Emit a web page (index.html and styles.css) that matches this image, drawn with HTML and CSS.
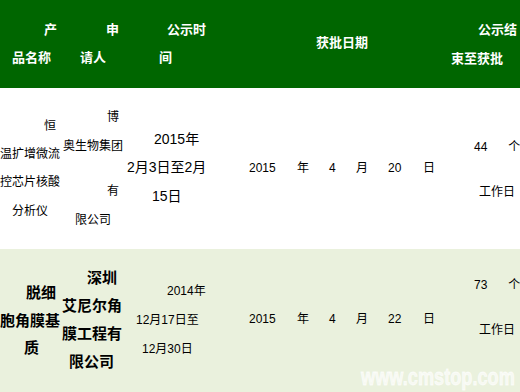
FILE: index.html
```html
<!DOCTYPE html>
<html lang="zh-CN">
<head>
<meta charset="utf-8">
<title>公示</title>
<link rel="stylesheet" href="styles.css">
</head>
<body>
<div class="tbl">
  <div class="row head">
    <div class="cell vh"><div class="x44">产</div><div class="x12">品名称</div></div>
    <div class="cell vh"><div class="x44">申</div><div class="x18">请人</div></div>
    <div class="cell vh"><div class="x42">公示时</div><div class="x34">间</div></div>
    <div class="cell vh-one"><div class="x107">获批日期</div></div>
    <div class="cell vh5"><div class="x33">公示结</div><div class="x6">束至获批</div></div>
  </div>
  <div class="row r1">
    <div class="cell r1c1"><div class="x44">恒</div><div>温扩增微流</div><div>控芯片核酸</div><div class="x12">分析仪</div></div>
    <div class="cell r1c2"><div class="x45">博</div><div class="x1">奥生物集团</div><div class="x45 gap">有</div><div class="x13">限公司</div></div>
    <div class="cell r1c3"><div class="x29">2015年</div><div class="x2">2月3日至2月</div><div class="x27">15日</div></div>
    <div class="cell r1c4"><div class="date"><span>2015</span><span>年</span><span>4</span><span>月</span><span>20</span><span>日</span></div></div>
    <div class="cell r1c5"><div class="x29">44<span class="unit">个</span></div><div class="x34">工作日</div></div>
  </div>
  <div class="row r2">
    <div class="cell r2c1"><div class="x26">脱细</div><div>胞角膜基</div><div class="x24">质</div></div>
    <div class="cell r2c2"><div class="x25">深圳</div><div>艾尼尔角</div><div>膜工程有</div><div class="x7">限公司</div></div>
    <div class="cell r2c3"><div class="x42">2014年</div><div class="x11">12月17日至</div><div class="x17">12月30日</div></div>
    <div class="cell r2c4"><div class="date"><span>2015</span><span>年</span><span>4</span><span>月</span><span>22</span><span>日</span></div></div>
    <div class="cell r2c5"><div class="x29">73<span class="unit">个</span></div><div class="x34">工作日</div></div>
  </div>
</div>
<div class="watermark">www.cmstop.com</div>
</body>
</html>
```
FILE: styles.css
```css
* { box-sizing: border-box; margin: 0; padding: 0; }
html, body { width: 520px; height: 392px; overflow: hidden; }
body {
  position: relative;
  font-family: "Liberation Sans", "Noto Sans CJK SC", sans-serif;
  font-size: 12px;
  color: #000;
  background: #fff;
}
.row {
  display: grid;
  grid-template-columns: 62px 63px 84px 236px 75px;
}
.cell { white-space: nowrap; }
.head { height: 88px; background: #006600; color: #fff; font-weight: bold; font-size: 13px; }
.r1 { height: 161px; background: #fff; }
.r2 { height: 143px; background: #eaf1dd; }

/* header cells */
.vh { padding-top: 16px; line-height: 27.5px; }
.vh-one { padding-top: 29px; line-height: 27.5px; }
.vh5 { padding-top: 14.5px; line-height: 29px; }

/* row 1 */
.r1c1 { padding-top: 23.8px; line-height: 28.3px; }
.r1c2 { padding-top: 15.2px; line-height: 28.5px; }
.r1c2 .gap { margin-top: 17px; }
.r1c3 { padding-top: 36.7px; line-height: 28.5px; font-size: 14px; }
.r1c4 { padding-top: 66px; line-height: 28px; }
.r1c5 { padding-top: 36.5px; line-height: 45px; }

/* row 2 */
.r2c1 { padding-top: 30.4px; line-height: 27.25px; font-size: 15px; font-weight: bold; }
.r2c2 { padding-top: 14.5px; line-height: 28px; font-size: 15px; font-weight: bold; }
.r2c3 { padding-top: 28.1px; line-height: 28.75px; }
.r2c4 { padding-top: 56px; line-height: 28px; }
.r2c5 { padding-top: 13.75px; line-height: 45.5px; }

/* date row inside 获批日期 */
.date {
  display: grid;
  grid-template-columns: 48px 32px 27px 32px 35px auto;
  padding-left: 40px;
}
.unit { margin-left: 21px; }

/* line indents */
.x1 { padding-left: 1px; }
.x2 { padding-left: 2px; }
.x6 { padding-left: 6px; }
.x7 { padding-left: 7px; }
.x11 { padding-left: 11px; }
.x12 { padding-left: 12px; }
.x13 { padding-left: 13px; }
.x17 { padding-left: 17px; }
.x18 { padding-left: 18px; }
.x24 { padding-left: 24px; }
.x25 { padding-left: 25px; }
.x26 { padding-left: 26px; }
.x27 { padding-left: 27px; }
.x29 { padding-left: 29px; }
.x33 { padding-left: 33px; }
.x34 { padding-left: 34px; }
.x42 { padding-left: 42px; }
.x44 { padding-left: 44px; }
.x45 { padding-left: 45px; }
.x107 { padding-left: 107px; }

.watermark {
  position: absolute;
  left: 361px;
  top: 364px;
  font-family: "Liberation Sans", sans-serif;
  font-weight: bold;
  font-size: 23px;
  line-height: 26px;
  color: rgba(255, 255, 255, 0.65);
  -webkit-text-stroke: 0.8px rgba(255, 255, 255, 0.65);
  white-space: nowrap;
  transform: scaleX(0.79);
  transform-origin: left top;
}
```
